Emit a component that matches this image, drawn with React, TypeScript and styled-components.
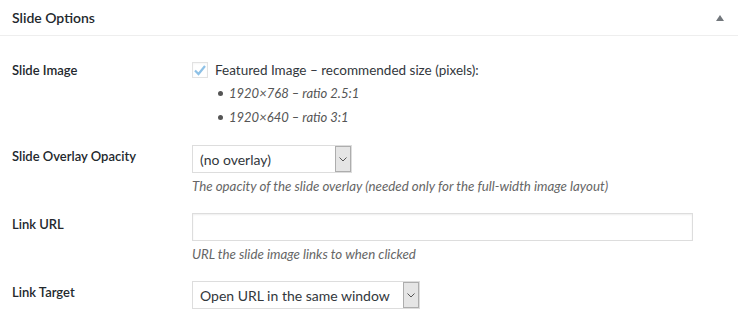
import React from "react";
import styled, { createGlobalStyle } from "styled-components";

const GlobalStyle = createGlobalStyle`
  html, body {
    margin: 0;
    padding: 0;
    background: #ffffff;
  }
  body {
    font-family: Lato, "Open Sans", sans-serif;
    color: #444444;
  }
`;

const Panel = styled.div`
  width: 738px;
  height: 330px;
  background: #ffffff;
  overflow: hidden;
`;

const Header = styled.div`
  height: 35px;
  border-bottom: 1px solid #eeeeee;
  display: flex;
  align-items: center;
  justify-content: space-between;
  padding: 0 12px;
`;

const Title = styled.h2`
  margin: 0;
  font-size: 14px;
  font-weight: 600;
  color: #23282d;
`;

const Toggle = styled.span`
  width: 0;
  height: 0;
  margin-right: 2px;
  border-left: 4px solid transparent;
  border-right: 4px solid transparent;
  border-bottom: 6px solid #72777c;
`;

const Body = styled.div`
  padding: 14px 12px 0;
`;

const Row = styled.div`
  display: grid;
  grid-template-columns: 180px 1fr;
  padding: 9px 0;
`;

const Label = styled.div`
  margin-top: 2px;
  font-size: 13px;
  font-weight: 600;
  line-height: 18px;
  color: #23282d;
`;

const Field = styled.div<{ $offset?: number }>`
  display: flex;
  flex-direction: column;
  align-items: flex-start;
  gap: 4px;
  padding-top: ${(p) => p.$offset ?? 0}px;
`;

const CheckLine = styled.label`
  display: flex;
  align-items: center;
  gap: 7px;
  font-size: 13.5px;
  line-height: 18px;
  color: #32373c;
`;

const CheckBox = styled.span`
  width: 14px;
  height: 14px;
  border: 1px solid #e2e2e2;
  box-shadow: inset 0 1px 2px rgba(0, 0, 0, 0.04);
  display: flex;
  align-items: center;
  justify-content: center;
`;

const Sizes = styled.ul`
  list-style: none;
  margin: -5px 0 1px 26px;
  padding: 0;
`;

const Size = styled.li`
  display: flex;
  align-items: center;
  gap: 6px;
  margin-top: 6px;
  font-size: 13px;
  font-style: italic;
  line-height: 18px;
  color: #555555;

  &::before {
    content: "";
    width: 5px;
    height: 5px;
    border-radius: 50%;
    background: #555555;
  }
`;

const Select = styled.div<{ $width: number }>`
  width: ${(p) => p.$width}px;
  height: 28px;
  box-sizing: border-box;
  border: 1px solid #dddddd;
  display: flex;
  align-items: stretch;
  background: #ffffff;
`;

const SelectValue = styled.span`
  flex: 1;
  display: flex;
  align-items: center;
  padding-left: 7px;
  font-size: 14px;
  color: #32373c;
  white-space: nowrap;
`;

const SelectArrow = styled.span`
  width: 16px;
  box-sizing: border-box;
  border: 1px solid #adadad;
  background: #e5e5e5;
  display: flex;
  align-items: center;
  justify-content: center;
`;

const TextInput = styled.div`
  width: 501px;
  height: 28px;
  box-sizing: border-box;
  border: 1px solid #dddddd;
  box-shadow: inset 0 1px 2px rgba(0, 0, 0, 0.07);
`;

const Description = styled.p`
  margin: 0;
  font-size: 13.3px;
  font-style: italic;
  line-height: 18px;
  color: #666666;
`;

const Chevron = () => (
  <svg width="8" height="5" viewBox="0 0 8 5">
    <path d="M0.5 0.5 L4 4 L7.5 0.5" fill="none" stroke="#555" strokeWidth="1" />
  </svg>
);

const Check = () => (
  <svg width="12" height="11" viewBox="0 0 12 11">
    <path d="M1 5.5 L4.5 9 L11 1" fill="none" stroke="#8ec1e6" strokeWidth="2.2" />
  </svg>
);

const App: React.FC = () => {
  return (
    <>
      <GlobalStyle />
      <Panel>
        <Header>
          <Title>Slide Options</Title>
          <Toggle />
        </Header>
        <Body>
          <Row>
            <Label>Slide Image</Label>
            <Field $offset={2}>
              <CheckLine>
                <CheckBox>
                  <Check />
                </CheckBox>
                Featured Image – recommended size (pixels):
              </CheckLine>
              <Sizes>
                <Size>1920×768 – ratio 2.5:1</Size>
                <Size>1920×640 – ratio 3:1</Size>
              </Sizes>
            </Field>
          </Row>
          <Row>
            <Label>Slide Overlay Opacity</Label>
            <Field>
              <Select $width={160}>
                <SelectValue>(no overlay)</SelectValue>
                <SelectArrow>
                  <Chevron />
                </SelectArrow>
              </Select>
              <Description>
                The opacity of the slide overlay (needed only for the full-width image layout)
              </Description>
            </Field>
          </Row>
          <Row>
            <Label>Link URL</Label>
            <Field>
              <TextInput />
              <Description>URL the slide image links to when clicked</Description>
            </Field>
          </Row>
          <Row>
            <Label>Link Target</Label>
            <Field>
              <Select $width={228}>
                <SelectValue>Open URL in the same window</SelectValue>
                <SelectArrow>
                  <Chevron />
                </SelectArrow>
              </Select>
            </Field>
          </Row>
        </Body>
      </Panel>
    </>
  );
};

export default App;
